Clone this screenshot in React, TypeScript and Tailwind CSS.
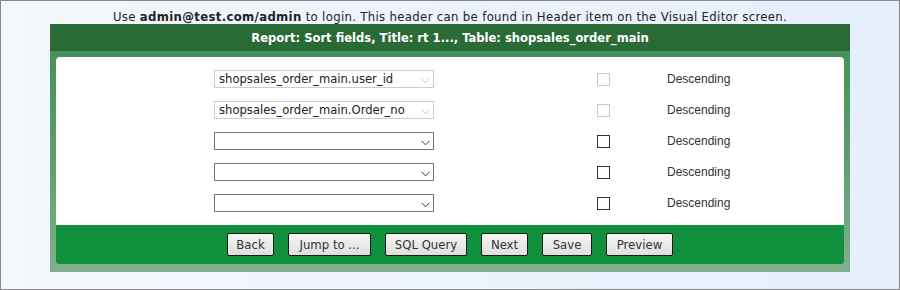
import React from "react";

type SortRow = {
  field: string;
  disabled: boolean;
};

const rows: SortRow[] = [
  { field: "shopsales_order_main.user_id", disabled: true },
  { field: "shopsales_order_main.Order_no", disabled: true },
  { field: "", disabled: false },
  { field: "", disabled: false },
  { field: "", disabled: false },
];

const buttons = [
  { label: "Back", width: "w-[47px]" },
  { label: "Jump to ...", width: "w-[83px]" },
  { label: "SQL Query", width: "w-[82px]" },
  { label: "Next", width: "w-[47px]" },
  { label: "Save", width: "w-[50px]" },
  { label: "Preview", width: "w-[67px]" },
];

const Chevron = ({ disabled }: { disabled: boolean }) => (
  <svg width="9" height="6" viewBox="0 0 9 6" className="shrink-0">
    <polyline
      points="0.5,0.8 4.5,4.8 8.5,0.8"
      fill="none"
      stroke={disabled ? "#c4c4c4" : "#333"}
      strokeWidth="1"
    />
  </svg>
);

const FieldSelect = ({ field, disabled }: SortRow) => (
  <div
    className={`flex h-[18px] w-[220px] items-center justify-between border pl-[4px] pr-[3px] ${
      disabled ? "border-[#cccccc]" : "border-[#767676]"
    }`}
  >
    <span className="truncate text-[12.9px] leading-[16px] text-[#222]">{field}</span>
    <span className="pt-[3px]">
      <Chevron disabled={disabled} />
    </span>
  </div>
);

const Checkbox = ({ disabled }: { disabled: boolean }) => (
  <span
    className={`block size-[13px] border bg-white ${
      disabled ? "border-[#c9c9c9]" : "border-[#333]"
    }`}
  />
);

export default function App() {
  return (
    <div className="h-[290px] w-[900px] border border-[#8a8a8a] bg-gradient-to-r from-[#f4f7fb] to-[#e6effd] font-['DejaVu_Sans_Condensed','Liberation_Sans',sans-serif]">
      <p className="pt-[8px] text-center text-[13px] leading-[15px] tracking-[0.33px] text-[#222]">
        Use <b>admin@test.com/admin</b> to login. This header can be found in Header item on the
        Visual Editor screen.
      </p>

      <div className="ml-[49px] w-[800px] bg-gradient-to-b from-[#3f8f53] via-[#5a9e69] to-[#80b08c]">
        <div className="flex h-[27px] items-center justify-center bg-[#296a37] text-[12.85px] font-bold text-white">
          Report: Sort fields, Title: rt 1..., Table: shopsales_order_main
        </div>

        <div className="px-[6px] pb-[8px] pt-[6px]">
          <div className="flex flex-col gap-[13px] rounded-t-[4px] bg-white py-[13px]">
            {rows.map((row, i) => (
              <div key={i} className="flex items-center">
                <div className="ml-[158px]">
                  <FieldSelect {...row} />
                </div>
                <div className="ml-[163px]">
                  <Checkbox disabled={row.disabled} />
                </div>
                <span className="ml-[57px] font-['Liberation_Sans',sans-serif] text-[12px] leading-[16px] text-[#333]">
                  Descending
                </span>
              </div>
            ))}
          </div>

          <div className="flex h-[39px] items-center justify-center gap-[14px] rounded-b-[3px] bg-[#10903c]">
            {buttons.map(({ label, width }) => (
              <button
                key={label}
                className={`h-[23px] ${width} rounded-[2px] border border-[#1a1a1a] bg-gradient-to-b from-[#f6f6f6] to-[#dedede] text-[13px] leading-[21px] text-[#333]`}
              >
                {label}
              </button>
            ))}
          </div>
        </div>
      </div>
    </div>
  );
}
